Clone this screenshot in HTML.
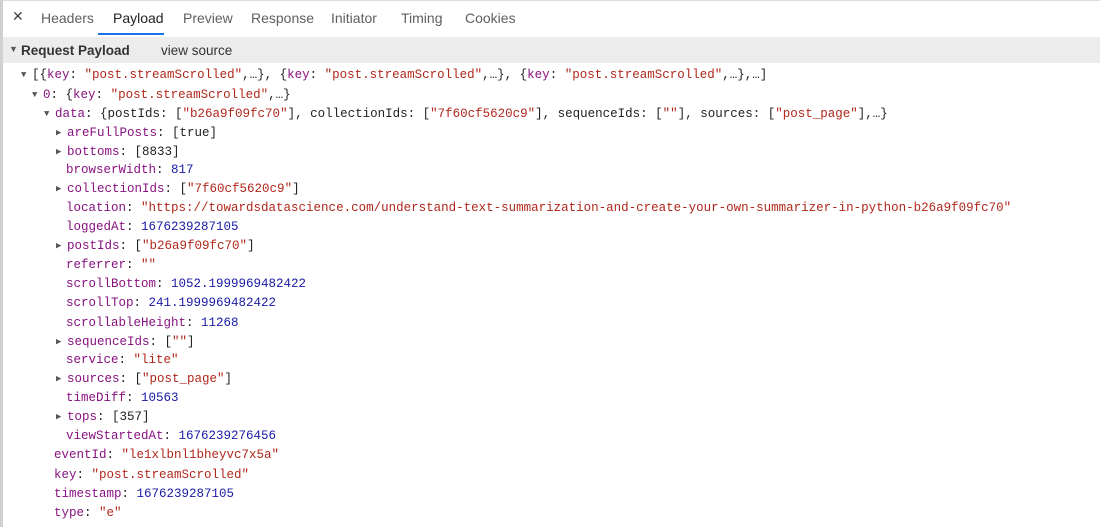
<!DOCTYPE html>
<html><head><meta charset="utf-8"><style>
body{margin:0;width:1100px;height:527px;background:#fff;overflow:hidden;font-family:"Liberation Sans",sans-serif;position:relative}
.lb{position:absolute;left:0;top:0;width:3px;height:527px;background:#d0d0d0}
.tabs{position:absolute;left:3px;top:0;right:0;height:36px;border-bottom:1px solid #cbcbcb;border-top:1px solid #ddd;font-size:14px;color:#5f5f5f}
.tabs span{position:absolute;top:9px}
.ul{position:absolute;left:98px;top:33px;width:66px;height:2px;background:#1a73e8}
.hdr{position:absolute;left:3px;top:37px;right:0;height:26px;background:#ececec;font-size:13.5px;color:#333}
.l{position:absolute;font-family:"Liberation Mono",monospace;font-size:12.5px;white-space:pre;color:#222;height:19px;line-height:19px}
.k{color:#881280}.s{color:#b1271b}.n{color:#1a1aa6}
.a{display:inline-block;width:11px;font-size:9px;color:#555;text-align:left;vertical-align:top}
</style></head><body>
<div class="lb"></div>
<div class="tabs">
<span style="left:9px;top:7px;color:#444">✕</span>
<span style="left:38px">Headers</span>
<span style="left:110px;color:#222">Payload</span>
<span style="left:180px">Preview</span>
<span style="left:248px">Response</span>
<span style="left:328px">Initiator</span>
<span style="left:398px">Timing</span>
<span style="left:462px">Cookies</span>
</div>
<div class="ul"></div>
<div class="hdr"><span style="position:absolute;left:6px;top:7px;font-size:9px;color:#555">▼</span><b style="position:absolute;left:18px;top:6px">Request Payload</b><span style="position:absolute;left:158px;top:6px">view source</span></div>
<div class="l" style="left:21px;top:66px"><span class="a">▼</span>[{<span class="k">key</span>: <span class="s">"post.streamScrolled"</span>,…}, {<span class="k">key</span>: <span class="s">"post.streamScrolled"</span>,…}, {<span class="k">key</span>: <span class="s">"post.streamScrolled"</span>,…},…]</div>
<div class="l" style="left:32px;top:86px"><span class="a">▼</span><span class="k">0</span>: {<span class="k">key</span>: <span class="s">"post.streamScrolled"</span>,…}</div>
<div class="l" style="left:44px;top:105px"><span class="a">▼</span><span class="k">data</span>: {postIds: [<span class="s">"b26a9f09fc70"</span>], collectionIds: [<span class="s">"7f60cf5620c9"</span>], sequenceIds: [<span class="s">""</span>], sources: [<span class="s">"post_page"</span>],…}</div>
<div class="l" style="left:56px;top:124px"><span class="a">▶</span><span class="k">areFullPosts</span>: [true]</div>
<div class="l" style="left:56px;top:143px"><span class="a">▶</span><span class="k">bottoms</span>: [8833]</div>
<div class="l" style="left:66px;top:161px"><span class="k">browserWidth</span>: <span class="n">817</span></div>
<div class="l" style="left:56px;top:180px"><span class="a">▶</span><span class="k">collectionIds</span>: [<span class="s">"7f60cf5620c9"</span>]</div>
<div class="l" style="left:66px;top:199px"><span class="k">location</span>: <span class="s">"https://towardsdatascience.com/understand-text-summarization-and-create-your-own-summarizer-in-python-b26a9f09fc70"</span></div>
<div class="l" style="left:66px;top:218px"><span class="k">loggedAt</span>: <span class="n">1676239287105</span></div>
<div class="l" style="left:56px;top:237px"><span class="a">▶</span><span class="k">postIds</span>: [<span class="s">"b26a9f09fc70"</span>]</div>
<div class="l" style="left:66px;top:256px"><span class="k">referrer</span>: <span class="s">""</span></div>
<div class="l" style="left:66px;top:275px"><span class="k">scrollBottom</span>: <span class="n">1052.1999969482422</span></div>
<div class="l" style="left:66px;top:294px"><span class="k">scrollTop</span>: <span class="n">241.1999969482422</span></div>
<div class="l" style="left:66px;top:314px"><span class="k">scrollableHeight</span>: <span class="n">11268</span></div>
<div class="l" style="left:56px;top:333px"><span class="a">▶</span><span class="k">sequenceIds</span>: [<span class="s">""</span>]</div>
<div class="l" style="left:66px;top:351px"><span class="k">service</span>: <span class="s">"lite"</span></div>
<div class="l" style="left:56px;top:370px"><span class="a">▶</span><span class="k">sources</span>: [<span class="s">"post_page"</span>]</div>
<div class="l" style="left:66px;top:389px"><span class="k">timeDiff</span>: <span class="n">10563</span></div>
<div class="l" style="left:56px;top:408px"><span class="a">▶</span><span class="k">tops</span>: [357]</div>
<div class="l" style="left:66px;top:427px"><span class="k">viewStartedAt</span>: <span class="n">1676239276456</span></div>
<div class="l" style="left:54px;top:446px"><span class="k">eventId</span>: <span class="s">"le1xlbnl1bheyvc7x5a"</span></div>
<div class="l" style="left:54px;top:466px"><span class="k">key</span>: <span class="s">"post.streamScrolled"</span></div>
<div class="l" style="left:54px;top:485px"><span class="k">timestamp</span>: <span class="n">1676239287105</span></div>
<div class="l" style="left:54px;top:504px"><span class="k">type</span>: <span class="s">"e"</span></div>
</body></html>
